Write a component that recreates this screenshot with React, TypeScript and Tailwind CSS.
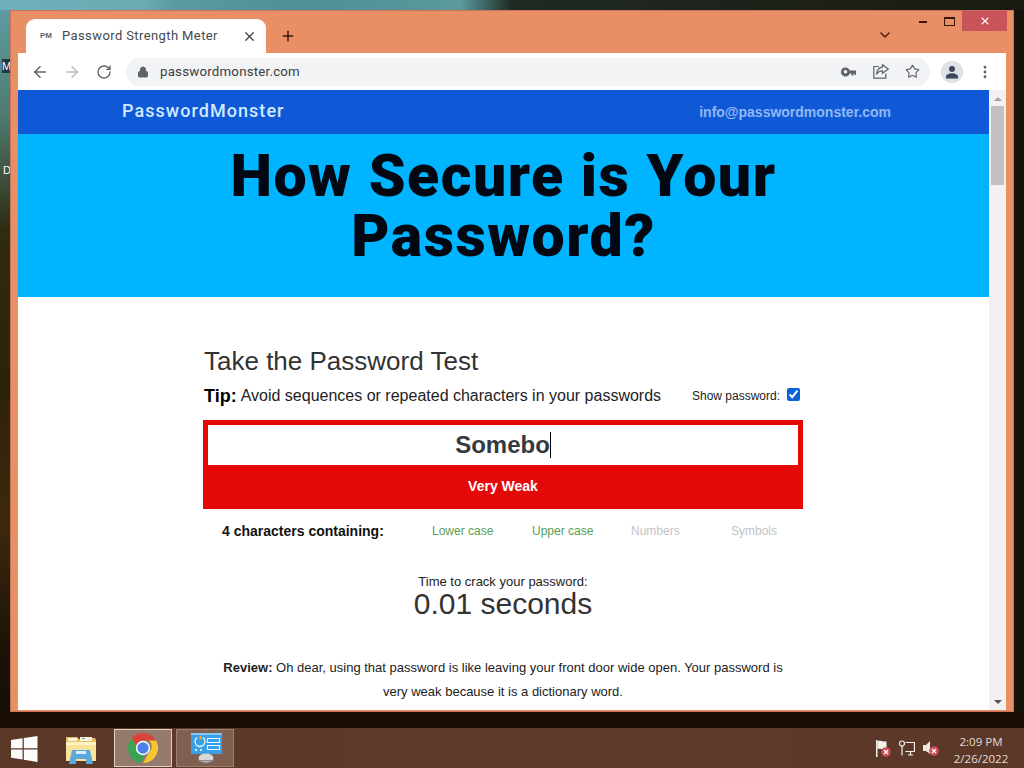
import { ArrowLeft, ArrowRight, ChevronDown, Lock, MoreVertical, Plus, RotateCw, Star, X } from 'lucide-react';

const sans = { fontFamily: '"Liberation Sans", Arial, sans-serif' };

function KeyIcon() {
    return (
        <svg width="16" height="10" viewBox="0 0 16 10" fill="#5f6368">
            <path d="M4.5 0.5a4.5 4.5 0 1 0 4.2 6h1.8v2h2v-2h1v1.5h1.5V3.5H8.7a4.5 4.5 0 0 0-4.2-3zm0 2.5a1.8 1.8 0 1 1 0 3.6 1.8 1.8 0 0 1 0-3.6z" />
        </svg>
    );
}

function ShareIcon() {
    return (
        <svg width="16" height="15" viewBox="0 0 16 15" fill="none" stroke="#5f6368" strokeWidth="1.2">
            <path d="M6 2.5H0.8v11.7h12V9.5" />
            <path d="M9.5 0.8l5.8 4.2-5.8 4.2V6.8C7 6.8 4.8 7.8 3.5 10.5 3.8 6.5 6 3.6 9.5 3.2z" />
        </svg>
    );
}

function AvatarIcon() {
    return (
        <div className="flex h-[22px] w-[22px] items-center justify-center rounded-full bg-[#dee1e6]">
            <svg width="14" height="14" viewBox="0 0 14 14" fill="#3c4858">
                <circle cx="7" cy="4" r="3" />
                <path d="M1 13.5v-2.2C1 9.5 4.5 8.2 7 8.2s6 1.3 6 3.1v2.2z" />
            </svg>
        </div>
    );
}

function WindowsLogo() {
    return (
        <svg width="27" height="26" viewBox="0 0 28 27" fill="#fbfbfb">
            <path d="M0 4.2L12 2.4v10.3H0z" />
            <path d="M13.3 2.2L27.5 0v12.7H13.3z" />
            <path d="M0 14h12v10.4L0 22.6z" />
            <path d="M13.3 14h14.2v13l-14.2-2.4z" />
        </svg>
    );
}

function FolderIcon() {
    return (
        <svg width="32" height="32" viewBox="0 0 32 32">
            <path d="M1 4h11l2 2h4l1-1h11l1 2v20H1z" fill="#e2c163" />
            <path d="M3 5h9v3H3z" fill="#fdf6d8" />
            <path d="M15 4h12v4H15z" fill="#f7f3e6" />
            <path d="M17 5h3v1h-3z" fill="#5fa05a" />
            <path d="M1 9h30v19H1z" fill="#f8e39a" />
            <path d="M1 9h30v3H1z" fill="#fff3c2" />
            <path d="M7 17h18l3 14H21v-5H11v5H4z" fill="#5aa8dc" />
            <path d="M11 18h10v3H11z" fill="#d9eefa" />
        </svg>
    );
}

function ChromeIcon() {
    return (
        <svg width="30" height="30" viewBox="0 0 30 30">
            <path d="M15 0a15 15 0 0 1 13 7.500H15a7.500 7.500 0 0 0-6.900 4.500L3.600 5.300A15 15 0 0 1 15 0z" fill="#d8433a" />
            <path d="M28 7.500A15 15 0 0 1 15 30l6.500-11.300A7.500 7.500 0 0 0 21 7.500z" fill="#f5c632" />
            <path d="M3.600 5.300l6.400 11.200a5.600 5.600 0 0 0 7.700 3.300L13.500 30A15 15 0 0 1 3.600 5.300z" fill="#3ca253" />
            <circle cx="15" cy="15" r="7.200" fill="#fff" />
            <circle cx="15" cy="15" r="5.700" fill="#4a80e8" />
        </svg>
    );
}

function PanelIcon() {
    return (
        <svg width="32" height="30" viewBox="0 0 32 30">
            <path d="M0 0h31v21H0z" fill="#3aa0e6" />
            <path d="M0 0h31v2H0z" fill="#7fcaf4" />
            <path d="M6 4.500a5 5 0 1 0 6 0" fill="none" stroke="#e8f6ff" strokeWidth="1.300" />
            <path d="M8.500 2.500h2v4h-2z" fill="#f5a53a" />
            <path d="M4 16h2v2H4zM9 16h2v2H9z" fill="#d6f0ff" />
            <path d="M16.500 5.500h12v4h-12zM16.500 12.500h12v4h-12z" fill="none" stroke="#e8f6ff" strokeWidth="1.200" />
            <ellipse cx="15" cy="25" rx="7.500" ry="4.500" fill="#d8d8d8" />
            <path d="M8 27h14v1.500H8z" fill="#8a8a8a" />
        </svg>
    );
}

function FlagIcon() {
    return (
        <svg width="16" height="17" viewBox="0 0 16 17">
            <path d="M1 0h1.500v17H1z" fill="#f4f1ea" />
            <path d="M2.500 1c3-1 5 1.500 9 0v8c-4 1.500-6-1-9 0z" fill="#f4f1ea" />
            <circle cx="11" cy="12" r="4.800" fill="#c9505a" />
            <path d="M9 10l4 4m0-4l-4 4" stroke="#fff" strokeWidth="1.200" />
        </svg>
    );
}

function NetworkIcon() {
    return (
        <svg width="16" height="16" viewBox="0 0 16 16" fill="none" stroke="#f4f1ea" strokeWidth="1.200">
            <circle cx="3" cy="3.500" r="2.500" />
            <path d="M3 6v9.500M6.500 2.500h9v9h-9M9 15h5M11.500 11.500V15" />
        </svg>
    );
}

function SoundIcon() {
    return (
        <svg width="16" height="16" viewBox="0 0 16 16">
            <path d="M0 5h3l4-4v13l-4-3H0z" fill="#ece8e0" />
            <circle cx="11" cy="11" r="4.800" fill="#c9505a" />
            <path d="M9 9l4 4m0-4l-4 4" stroke="#fff" strokeWidth="1.200" />
        </svg>
    );
}

function BrowserWindow() {
    return (
        <div className="absolute left-[10px] top-[10px] flex h-[702px] w-[1004px] flex-col border border-[#c9735a] bg-[#e98f66] pb-[1px] pl-[7px] pr-[7px]">
            <div className="relative flex h-[42px] shrink-0 items-end pl-[8px]">
                <div className="flex h-[34px] w-[240px] items-center rounded-t-[9px] bg-white pl-[14px] pr-[9px]">
                    <span className="w-[22px] text-[8px] font-bold text-[#5f6368]" style={sans}>PM</span>
                    <span className="grow text-[13px] tracking-[0.4px] text-[#45494d]" style={{ fontFamily: 'Roboto, sans-serif' }}>Password Strength Meter</span>
                    <X size={15} strokeWidth={2} className="text-[#3c4043]" />
                </div>
                <Plus size={16} strokeWidth={2.2} className="mb-[9px] ml-[14px] text-[#3d1408]" />
                <ChevronDown size={16} strokeWidth={2.4} className="absolute bottom-[10px] right-[113px] text-[#5a1d0b]" />
                <div className="absolute right-[-1px] top-0 flex h-[20px] items-center">
                    <div className="mr-[17px] mt-[2px] h-[2px] w-[8px] bg-[#3d1408]" />
                    <div className="mr-[7px] h-[9px] w-[11px] border border-t-2 border-[#3d1408]" />
                    <div className="flex h-[20px] w-[45px] items-center justify-center bg-[#c9545a]">
                        <X size={12} strokeWidth={2.2} className="text-white" />
                    </div>
                </div>
            </div>
            <div className="flex h-[37px] shrink-0 items-center bg-white pl-[13px]">
                <ArrowLeft size={18} strokeWidth={2} className="text-[#5f6368]" />
                <ArrowRight size={18} strokeWidth={2} className="ml-[14px] text-[#babcbe]" />
                <RotateCw size={16} strokeWidth={2} className="ml-[15px] text-[#5f6368]" />
                <div className="ml-[14px] flex h-[28px] w-[804px] items-center rounded-full bg-[#f1f3f4] pl-[11px] pr-[10px]">
                    <Lock size={12} fill="#5f6368" strokeWidth={2} className="text-[#5f6368]" />
                    <span className="ml-[11px] grow text-[13.300px] tracking-[0.2px] text-[#3c4043]" style={{ fontFamily: 'Roboto, sans-serif' }}>passwordmonster.com</span>
                    <KeyIcon />
                    <span className="ml-[16px]"><ShareIcon /></span>
                    <Star size={15} strokeWidth={1.8} className="ml-[16px] text-[#5f6368]" />
                </div>
                <div className="ml-[11px]"><AvatarIcon /></div>
                <MoreVertical size={16} strokeWidth={2.4} className="ml-[14px] text-[#5f6368]" />
            </div>
            <div className="flex min-h-0 grow">
                <Page />
                <div className="flex w-[17px] shrink-0 flex-col items-center bg-[#f1f1f1]">
                    <div className="mt-[7px] h-0 w-0 border-x-[4px] border-b-[4px] border-x-transparent border-b-[#a3a3a3]" />
                    <div className="mt-[5px] h-[79px] w-[13px] bg-[#c1c1c1]" />
                    <div className="grow" />
                    <div className="mb-[6px] h-0 w-0 border-x-[4px] border-t-[4px] border-x-transparent border-t-[#505050]" />
                </div>
            </div>
        </div>
    );
}

function Page() {
    return (
        <div className="min-w-0 grow overflow-hidden bg-white text-[#333]" style={sans}>
            <div className="flex h-[44px] items-center justify-between bg-[#0f58d6] pb-[3px] pl-[104px] pr-[98px]">
                <span className="text-[18px] font-medium tracking-[1.05px] text-[#cfeaff]" style={{ fontFamily: 'Roboto, sans-serif' }}>PasswordMonster</span>
                <span className="mt-[3px] text-[14px] font-bold text-[#8fb8f5]">info@passwordmonster.com</span>
            </div>
            <div className="flex h-[163px] items-center justify-center bg-[#00b4ff] pb-[19px]">
                <h1 className="w-[600px] text-center text-[59px] font-black leading-[60px] tracking-[1.5px] text-[#030712]" style={{ fontFamily: 'Roboto, sans-serif' }}>How Secure is Your Password?</h1>
            </div>
            <div className="ml-[185px] w-[600px] pt-[49px]">
                <h2 className="pl-[1px] text-[26px] leading-[30px] text-[#333]">Take the Password Test</h2>
                <div className="mt-[8px] flex h-[24px] items-center pl-[1px]">
                    <span className="text-[18px] font-bold text-black">Tip:</span>
                    <span className="ml-[4px] grow text-[16px] text-[#222]">Avoid sequences or repeated characters in your passwords</span>
                    <span className="text-[12px] text-[#222]">Show password:</span>
                    <input type="checkbox" checked readOnly className="mb-[3px] ml-[7px] mr-[3px] h-[13px] w-[13px] accent-[#0a63d8]" />
                </div>
                <div className="mt-[12px] h-[89px] bg-[#e50808] p-[5px]">
                    <div className="flex h-[40px] items-center justify-center bg-white text-[24px] font-bold text-[#343a40]">
                        Somebo<span className="h-[26px] w-[1px] bg-black" />
                    </div>
                    <div className="mt-[11px] text-center text-[14px] font-bold text-white">Very Weak</div>
                </div>
                <div className="mt-[13px] flex h-[18px] items-center text-[12px]">
                    <span className="ml-[19px] w-[210px] text-[14px] font-bold text-[#111]">4 characters containing:</span>
                    <span className="w-[100px] text-[#5a9e52]">Lower case</span>
                    <span className="w-[99px] text-[#5a9e52]">Upper case</span>
                    <span className="w-[100px] text-[#c4c4c4]">Numbers</span>
                    <span className="text-[#c4c4c4]">Symbols</span>
                </div>
                <div className="mt-[35px] text-center text-[13px] leading-[14px] text-[#222]">Time to crack your password:</div>
                <div className="text-center text-[30px] leading-[30px] text-[#333]">0.01 seconds</div>
                <p className="mt-[37px] px-[20px] text-center text-[13px] leading-[24px] text-[#222]">
                    <b>Review:</b> Oh dear, using that password is like leaving your front door wide open. Your password is very weak because it is a dictionary word.
                </p>
            </div>
        </div>
    );
}

function Taskbar() {
    return (
        <div className="absolute bottom-0 left-0 flex h-[40px] w-full items-center bg-[linear-gradient(90deg,#5a3727,#5f3b2b_60%,#5a3727)]" style={{ fontFamily: '"Open Sans", sans-serif' }}>
            <div className="ml-[11px] mt-[2px]"><WindowsLogo /></div>
            <div className="ml-[27px] mt-[2px]"><FolderIcon /></div>
            <div className="ml-[17px] flex h-[38px] w-[58px] items-center justify-center border border-[#ddd2c8] bg-[#967a6e]"><ChromeIcon /></div>
            <div className="ml-[4px] flex h-[38px] w-[58px] items-center justify-center border border-[#9a7f70] bg-[#7f5f50] pl-[4px]"><PanelIcon /></div>
            <div className="grow" />
            <FlagIcon />
            <div className="ml-[8px]"><NetworkIcon /></div>
            <div className="ml-[8px]"><SoundIcon /></div>
            <div className="ml-[13px] mr-[14px] mt-[3px] w-[58px] text-center text-[11.500px] leading-[17px] text-[#e6ddd6]">
                <div>2:09 PM</div>
                <div>2/26/2022</div>
            </div>
        </div>
    );
}

export default function App() {
    return (
        <div className="relative h-[768px] w-[1024px] overflow-hidden bg-[linear-gradient(180deg,#5f9da4_0%,#4f7a70_15%,#2f2c12_30%,#2c2208_50%,#3d290d_68%,#1a1206_85%,#0f0b05_100%)]">
            <div className="absolute right-0 top-0 h-full w-[10px] bg-[#15130c]" />
            <div className="absolute left-0 top-0 h-[10px] w-full bg-[linear-gradient(90deg,#6eb0bd_0%,#6aaab0_14%,#5a9aa0_17%,#4e8f98_30%,#5a9a9c_45%,#1f2a22_50%,#1b1a10_100%)]" />
            <div className="absolute left-0 top-[712px] h-[16px] w-full bg-[#190d05]" />
            <span className="absolute left-[2px] top-[59px] bg-[#1d3a44] text-[11px] leading-[14px] text-white" style={sans}>M</span>
            <span className="absolute left-[3px] top-[163px] text-[11px] leading-[14px] text-white" style={sans}>D</span>
            <BrowserWindow />
            <Taskbar />
        </div>
    );
}
